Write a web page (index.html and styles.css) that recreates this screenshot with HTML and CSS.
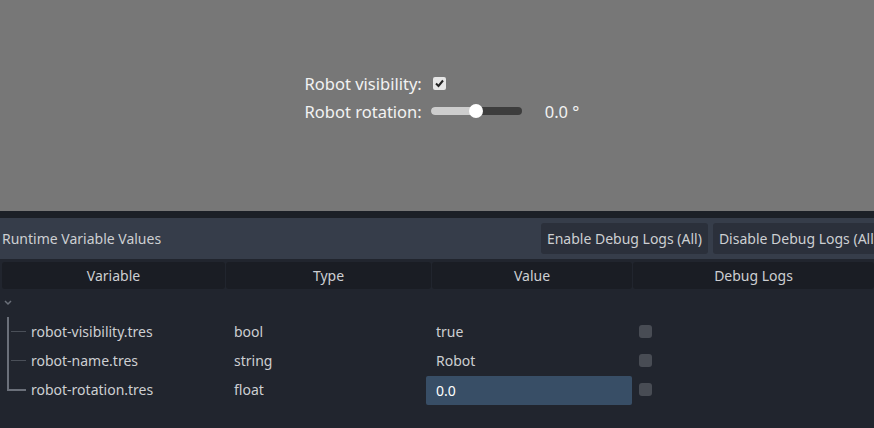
FILE: index.html
```html
<!DOCTYPE html>
<html lang="en">
<head>
    <meta charset="UTF-8">
    <title>Runtime Variables</title>
    <link rel="stylesheet" href="styles.css">
</head>
<body>
  <div class="viewport">
    <div class="controls">
      <div class="control-row">
        <span class="label">Robot visibility:</span>
        <span class="check-box">
          <svg width="13" height="13" viewBox="0 0 13 13"><path d="M3 6.5 L5.5 9 L10 3.5" fill="none" stroke="#222" stroke-width="2"/></svg>
        </span>
      </div>
      <div class="control-row">
        <span class="label">Robot rotation:</span>
        <span class="slider">
          <span class="slider-fill"></span>
          <span class="slider-knob"></span>
        </span>
        <span class="slider-value">0.0 °</span>
      </div>
    </div>
  </div>

  <div class="split"></div>

  <div class="panel">
    <div class="panel-head">
      <span class="panel-title">Runtime Variable Values</span>
      <div class="head-buttons">
        <button class="btn">Enable Debug Logs (All)</button>
        <button class="btn">Disable Debug Logs (All)</button>
      </div>
    </div>

    <div class="table">
      <div class="col-heads">
        <div class="col-head c1">Variable</div>
        <div class="col-head c2">Type</div>
        <div class="col-head c3">Value</div>
        <div class="col-head c4">Debug Logs</div>
      </div>

      <div class="root-row">
        <svg width="10" height="8" viewBox="0 0 10 8"><path d="M2 2 L5 5 L8 2" fill="none" stroke="#6b707a" stroke-width="1.5"/></svg>
      </div>

      <div class="rows">
        <div class="tree-line"></div>
        <div class="row">
          <div class="cell c1"><span class="branch"></span>robot-visibility.tres</div>
          <div class="cell c2">bool</div>
          <div class="cell c3">true</div>
          <div class="cell c4"><span class="log-box"></span></div>
        </div>
        <div class="row">
          <div class="cell c1"><span class="branch"></span>robot-name.tres</div>
          <div class="cell c2">string</div>
          <div class="cell c3">Robot</div>
          <div class="cell c4"><span class="log-box"></span></div>
        </div>
        <div class="row">
          <div class="cell c1"><span class="branch last"></span>robot-rotation.tres</div>
          <div class="cell c2">float</div>
          <div class="cell c3"><span class="edit">0.0</span></div>
          <div class="cell c4"><span class="log-box"></span></div>
        </div>
      </div>
    </div>
  </div>
</body>
</html>
```

FILE: styles.css
```css
body {
  margin: 0;
  width: 874px;
  height: 428px;
  overflow: hidden;
  font-family: "Noto Sans", sans-serif;
  background: #21252e;
}

/* game view */
.viewport {
  height: 211px;
  background: #777777;
  display: flex;
  justify-content: center;
  padding-top: 71px;
  box-sizing: border-box;
}
.controls {
  display: flex;
  flex-direction: column;
  gap: 4px;
  margin-left: 10px;
}
.control-row {
  display: flex;
  align-items: center;
  height: 24px;
}
.label {
  color: #f2f2f2;
  font-size: 16.5px;
  margin-right: 9px;
}
.check-box {
  width: 13px;
  height: 13px;
  margin-left: 2px;
  background: #e6e6e6;
  border-radius: 2px;
  display: flex;
}
.slider {
  position: relative;
  width: 91px;
  height: 8px;
  background: #3d3d3d;
  border-radius: 4px;
}
.slider-fill {
  display: block;
  width: 46px;
  height: 8px;
  background: #cdcdcd;
  border-radius: 4px 0 0 4px;
}
.slider-knob {
  position: absolute;
  left: 38px;
  top: -3px;
  width: 14px;
  height: 14px;
  border-radius: 50%;
  background: #ffffff;
}
.slider-value {
  color: #f2f2f2;
  font-size: 16.5px;
  margin-left: 23px;
}

.split {
  height: 7px;
  background: #1c2027;
}

/* bottom panel */
.panel-head {
  height: 41px;
  background: #363d4a;
  display: flex;
  align-items: center;
  justify-content: space-between;
  padding-left: 2px;
}
.panel-title {
  color: #cdcfd2;
  font-size: 14px;
}
.head-buttons {
  display: flex;
  gap: 5px;
  margin-right: -10px;
}
.btn {
  font-family: "Noto Sans", sans-serif;
  font-size: 14px;
  color: #cdcfd2;
  background: #2b303b;
  border: none;
  border-radius: 3px;
  height: 31px;
  padding: 0 6px;
  white-space: nowrap;
}

.table {
  padding: 3px 0 0 2px;
}
.col-heads {
  display: flex;
  height: 27px;
  gap: 1px;
}
.col-head {
  background: #1a1d24;
  color: #cdcfd2;
  font-size: 14px;
  display: flex;
  align-items: center;
  justify-content: center;
  border-radius: 3px;
}
.c1 { width: 223px; }
.c2 { width: 205px; }
.c3 { width: 200px; }
.c4 { flex: 1; }

.root-row {
  height: 28px;
  display: flex;
  align-items: center;
  padding-left: 1px;
}

.rows {
  position: relative;
}
.tree-line {
  position: absolute;
  left: 5px;
  top: 0;
  width: 2px;
  height: 74px;
  background: #6b707a;
}
.row {
  display: flex;
  height: 29px;
  align-items: center;
  color: #cdcfd2;
  font-size: 14px;
}
.cell {
  display: flex;
  align-items: center;
  height: 29px;
}
.row .c1 { width: 224px; }
.row .c2 { width: 192px; padding-left: 8px; }
.row .c3 { width: 206px; }
.row .c3:not(:has(.edit)) { padding-left: 10px; width: 196px; }
.branch {
  display: inline-block;
  width: 15px;
  height: 1px;
  background: #4a4f58;
  margin: 0 5px 0 9px;
}
.branch.last {
  background: #6b707a;
  height: 2px;
  margin-left: 5px;
  width: 19px;
}
.edit {
  display: flex;
  align-items: center;
  width: 196px;
  height: 29px;
  margin-top: 2px;
  padding-left: 10px;
  background: #384e66;
  border-radius: 2px;
  color: #ffffff;
}
.row .c4 {
  padding-left: 7px;
}
.log-box {
  width: 13px;
  height: 13px;
  border-radius: 3px;
  background: #484c54;
}
```
